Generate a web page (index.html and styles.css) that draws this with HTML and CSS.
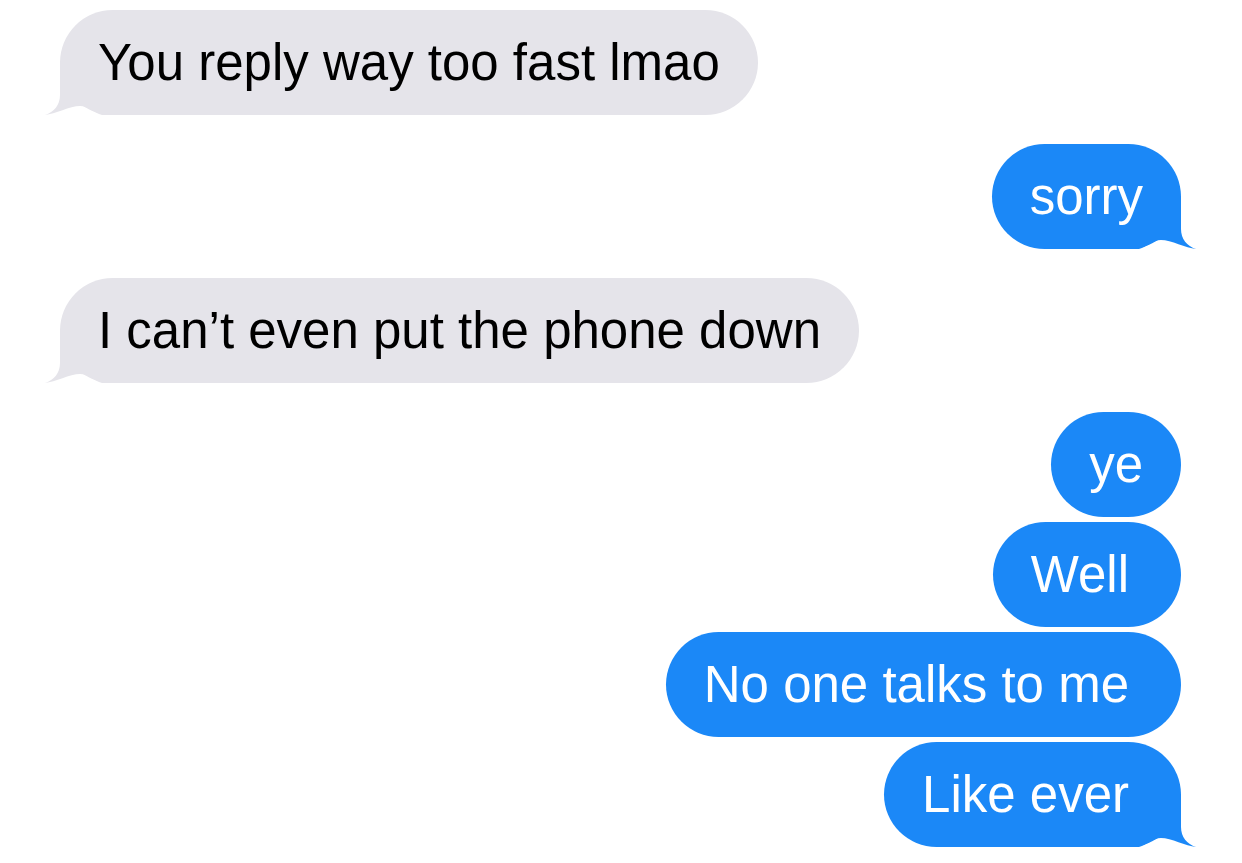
FILE: index.html
```html
<!DOCTYPE html>
<html lang="en">

<head>
    <meta charset="UTF-8">
    <meta name="viewport" content="width=device-width, initial-scale=1.0">
    <title>Messages</title>
    <link rel="stylesheet" href="styles.css">
</head>

<body>
    <div class="thread">
        <!--對方-->
        <div class="group them">
            <div class="bubble">
                <svg class="tail" viewBox="0 0 76 53"><path d="M0 0 L60 0 L60 33 C60 43 66 50 75 53 C65 52 50 44 40 44 C32 44 26 51 18 53 L0 53 Z"/></svg>
                <span class="text">You reply way too fast lmao</span>
            </div>
        </div>
        <!--自己-->
        <div class="group me">
            <div class="bubble">
                <svg class="tail" viewBox="0 0 76 53"><path d="M0 0 L60 0 L60 33 C60 43 66 50 75 53 C65 52 50 44 40 44 C32 44 26 51 18 53 L0 53 Z"/></svg>
                <span class="text">sorry</span>
            </div>
        </div>
        <div class="group them">
            <div class="bubble">
                <svg class="tail" viewBox="0 0 76 53"><path d="M0 0 L60 0 L60 33 C60 43 66 50 75 53 C65 52 50 44 40 44 C32 44 26 51 18 53 L0 53 Z"/></svg>
                <span class="text">I can’t even put the phone down</span>
            </div>
        </div>
        <div class="group me">
            <div class="bubble"><span class="text">ye</span></div>
            <div class="bubble pad-end"><span class="text">Well</span></div>
            <div class="bubble pad-end"><span class="text">No one talks to me</span></div>
            <div class="bubble pad-end">
                <svg class="tail" viewBox="0 0 76 53"><path d="M0 0 L60 0 L60 33 C60 43 66 50 75 53 C65 52 50 44 40 44 C32 44 26 51 18 53 L0 53 Z"/></svg>
                <span class="text">Like ever</span>
            </div>
        </div>
    </div>
</body>

</html>
```

FILE: styles.css
```css
body {
    margin: 0px;
    background: #ffffff;
    font-family: "Liberation Sans", Arial, sans-serif;
}

.thread {
    display: flex;
    flex-direction: column;
    gap: 29px;
    padding: 10px 61px 0px 60px;
}

.group {
    display: flex;
    flex-direction: column;
    gap: 5px;
}

.group.them {
    align-items: flex-start;
}

.group.me {
    align-items: flex-end;
}

.bubble {
    position: relative;
    height: 105px;
    line-height: 105px;
    padding: 0px 38px;
    border-radius: 52.5px;
    font-size: 51px;
    white-space: nowrap;
}

.bubble.pad-end {
    padding-right: 52px;
}

/*文字要蓋在尾巴上面*/
.bubble .text {
    position: relative;
}

.them .bubble {
    background: #e5e4ea;
    color: #000000;
}

.me .bubble {
    background: #1b88f7;
    color: #ffffff;
}

.tail {
    position: absolute;
    bottom: 0px;
    width: 76px;
    height: 53px;
}

.me .tail {
    right: -16px;
    fill: #1b88f7;
}

.them .tail {
    left: -16px;
    fill: #e5e4ea;
    transform: scaleX(-1);
}
```
